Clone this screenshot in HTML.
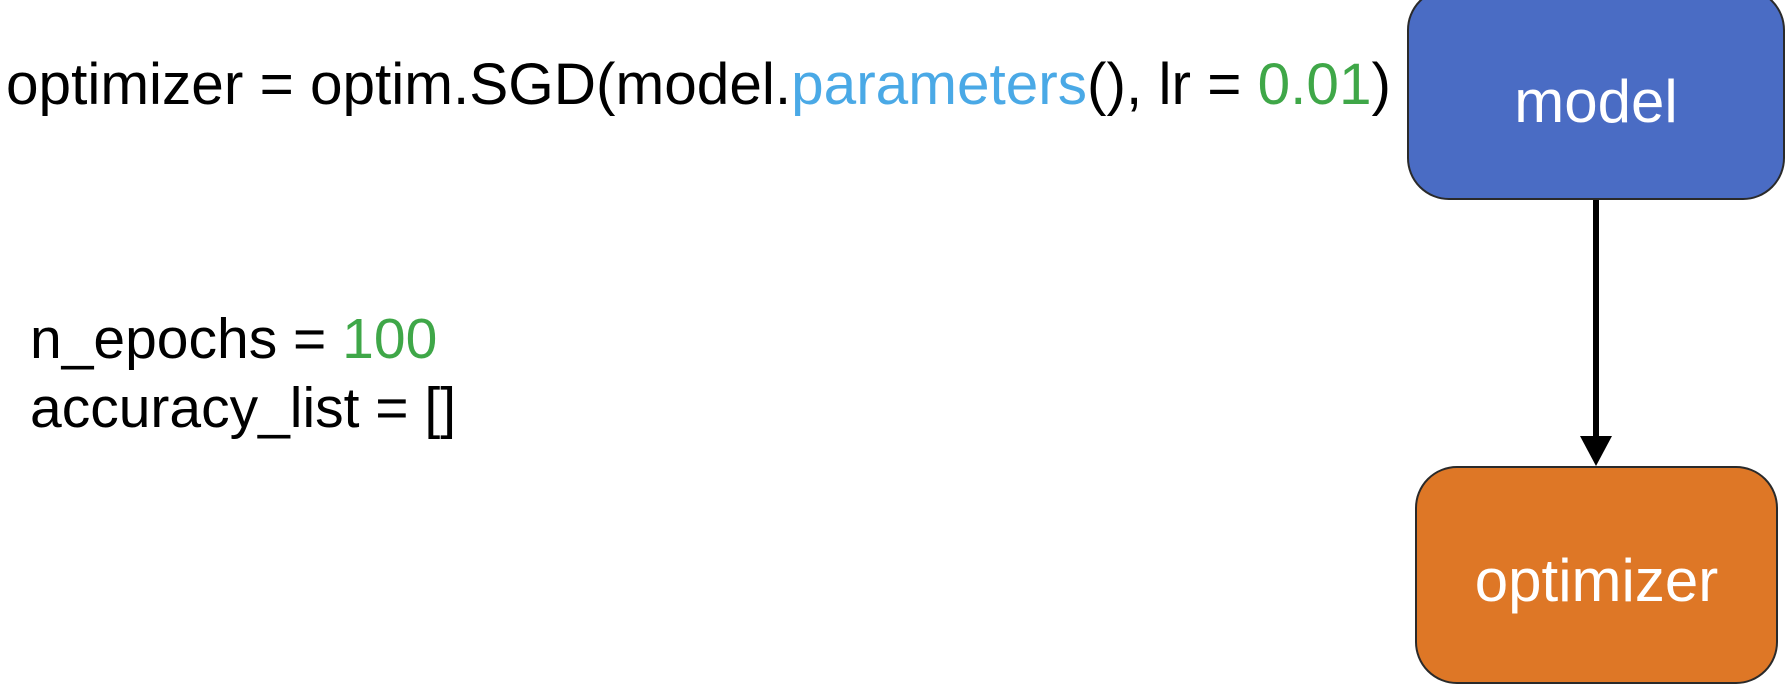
<!DOCTYPE html>
<html><head><meta charset="utf-8"><style>
body{margin:0;width:1786px;height:695px;background:#fff;overflow:hidden;position:relative;font-family:"Liberation Sans",Arial,sans-serif;}
.t{position:absolute;white-space:nowrap;color:#000;line-height:1}
.b{color:#4aa9e6}.g{color:#3fa748}
.box{position:absolute;border:2px solid #2a2a2a;border-radius:42px;color:#fff;font-size:60px;display:flex;align-items:center;justify-content:center;box-sizing:border-box}
</style></head><body>
<div class="t" style="left:6px;top:56px;font-size:58.5px">optimizer = optim.SGD(model.<span class="b">parameters</span>(), lr = <span class="g">0.01</span>)</div>
<div class="t" style="left:30px;top:311px;font-size:57px">n_epochs = <span class="g">100</span></div>
<div class="t" style="left:30px;top:380px;font-size:57px">accuracy_list = []</div>
<div class="box" style="left:1407px;top:-12px;width:378px;height:212px;background:#4a6cc4;padding-top:14px">model</div>
<div class="box" style="left:1415px;top:466px;width:363px;height:218px;background:#de7726;padding-top:10px">optimizer</div>
<div style="position:absolute;left:1593px;top:200px;width:6px;height:240px;background:#000"></div>
<svg style="position:absolute;left:1580px;top:436px" width="32" height="32"><polygon points="0,0 32,0 16,30" fill="#000"/></svg>
</body></html>
